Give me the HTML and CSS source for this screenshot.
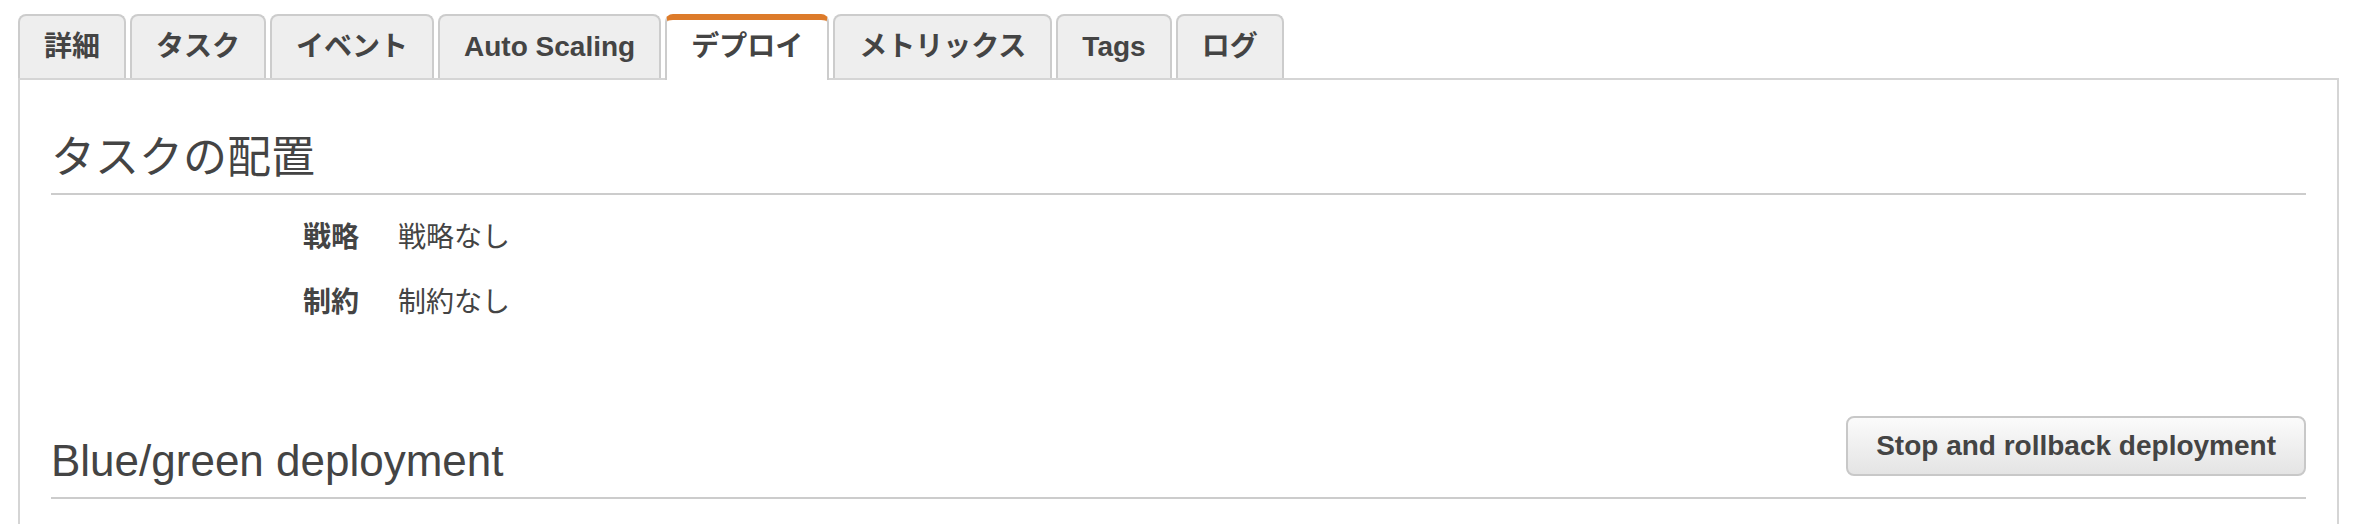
FILE: index.html
```html
<!DOCTYPE html>
<html lang="ja">
<head>
<meta charset="utf-8">
<title>デプロイ</title>
<link rel="stylesheet" href="styles.css">
</head>
<body>
<div class="page">
  <ul class="tabs">
    <li class="tab">詳細</li>
    <li class="tab">タスク</li>
    <li class="tab">イベント</li>
    <li class="tab">Auto Scaling</li>
    <li class="tab active">デプロイ</li>
    <li class="tab">メトリックス</li>
    <li class="tab">Tags</li>
    <li class="tab">ログ</li>
  </ul>
  <div class="panel">
    <div class="section-head first">
      <h2>タスクの配置</h2>
    </div>
    <dl class="props">
      <dt>戦略</dt><dd>戦略なし</dd>
      <dt>制約</dt><dd>制約なし</dd>
    </dl>
    <div class="section-head second">
      <h2>Blue/green deployment</h2>
      <button class="btn" type="button">Stop and rollback deployment</button>
    </div>
  </div>
</div>
</body>
</html>
```

FILE: styles.css
```css
html, body {
  margin: 0;
  background: #ffffff;
}
body {
  font-family: "Liberation Sans", "Noto Sans CJK JP", sans-serif;
  color: #444444;
}
.page {
  padding: 14px 17px 0 18px;
}
.tabs {
  display: flex;
  align-items: flex-start;
  gap: 4px;
  list-style: none;
  margin: 0 0 -2px 0;
  padding: 0;
  position: relative;
  z-index: 1;
}
.tab {
  box-sizing: border-box;
  height: 64px;
  display: flex;
  align-items: center;
  padding: 0 24px;
  border: 2px solid #cccccc;
  border-bottom: 0;
  border-radius: 8px 8px 0 0;
  background: #eeeeee;
  font-size: 28px;
  font-weight: bold;
  line-height: 1;
  color: #444444;
  white-space: nowrap;
}
.tab.active {
  height: 66px;
  border-top: 6px solid #dd7b2a;
  background: #ffffff;
  padding-bottom: 6px;
}
.panel {
  border: 2px solid #d5d5d5;
  padding: 54px 31px 120px 31px;
}
.section-head {
  display: flex;
  justify-content: space-between;
  align-items: flex-end;
  border-bottom: 2px solid #cccccc;
  padding-bottom: 11px;
}
.section-head h2 {
  margin: 0;
  font-size: 44px;
  font-weight: normal;
  line-height: 48px;
  color: #444444;
}
.section-head.second {
  margin-top: 93px;
  padding-bottom: 12px;
}
.props {
  display: grid;
  grid-template-columns: 308px 1fr;
  column-gap: 39px;
  row-gap: 25px;
  margin: 23px 0 0 0;
  font-size: 28px;
  line-height: 40px;
}
.props dt {
  font-weight: bold;
  text-align: right;
}
.props dd {
  margin: 0;
}
.btn {
  box-sizing: border-box;
  height: 60px;
  margin-bottom: 9px;
  padding: 0 28px;
  border: 2px solid #c8c8c8;
  border-radius: 8px;
  background: linear-gradient(#fbfbfb, #e4e4e4);
  font-family: inherit;
  font-size: 28px;
  font-weight: bold;
  color: #444444;
  white-space: nowrap;
}
```
